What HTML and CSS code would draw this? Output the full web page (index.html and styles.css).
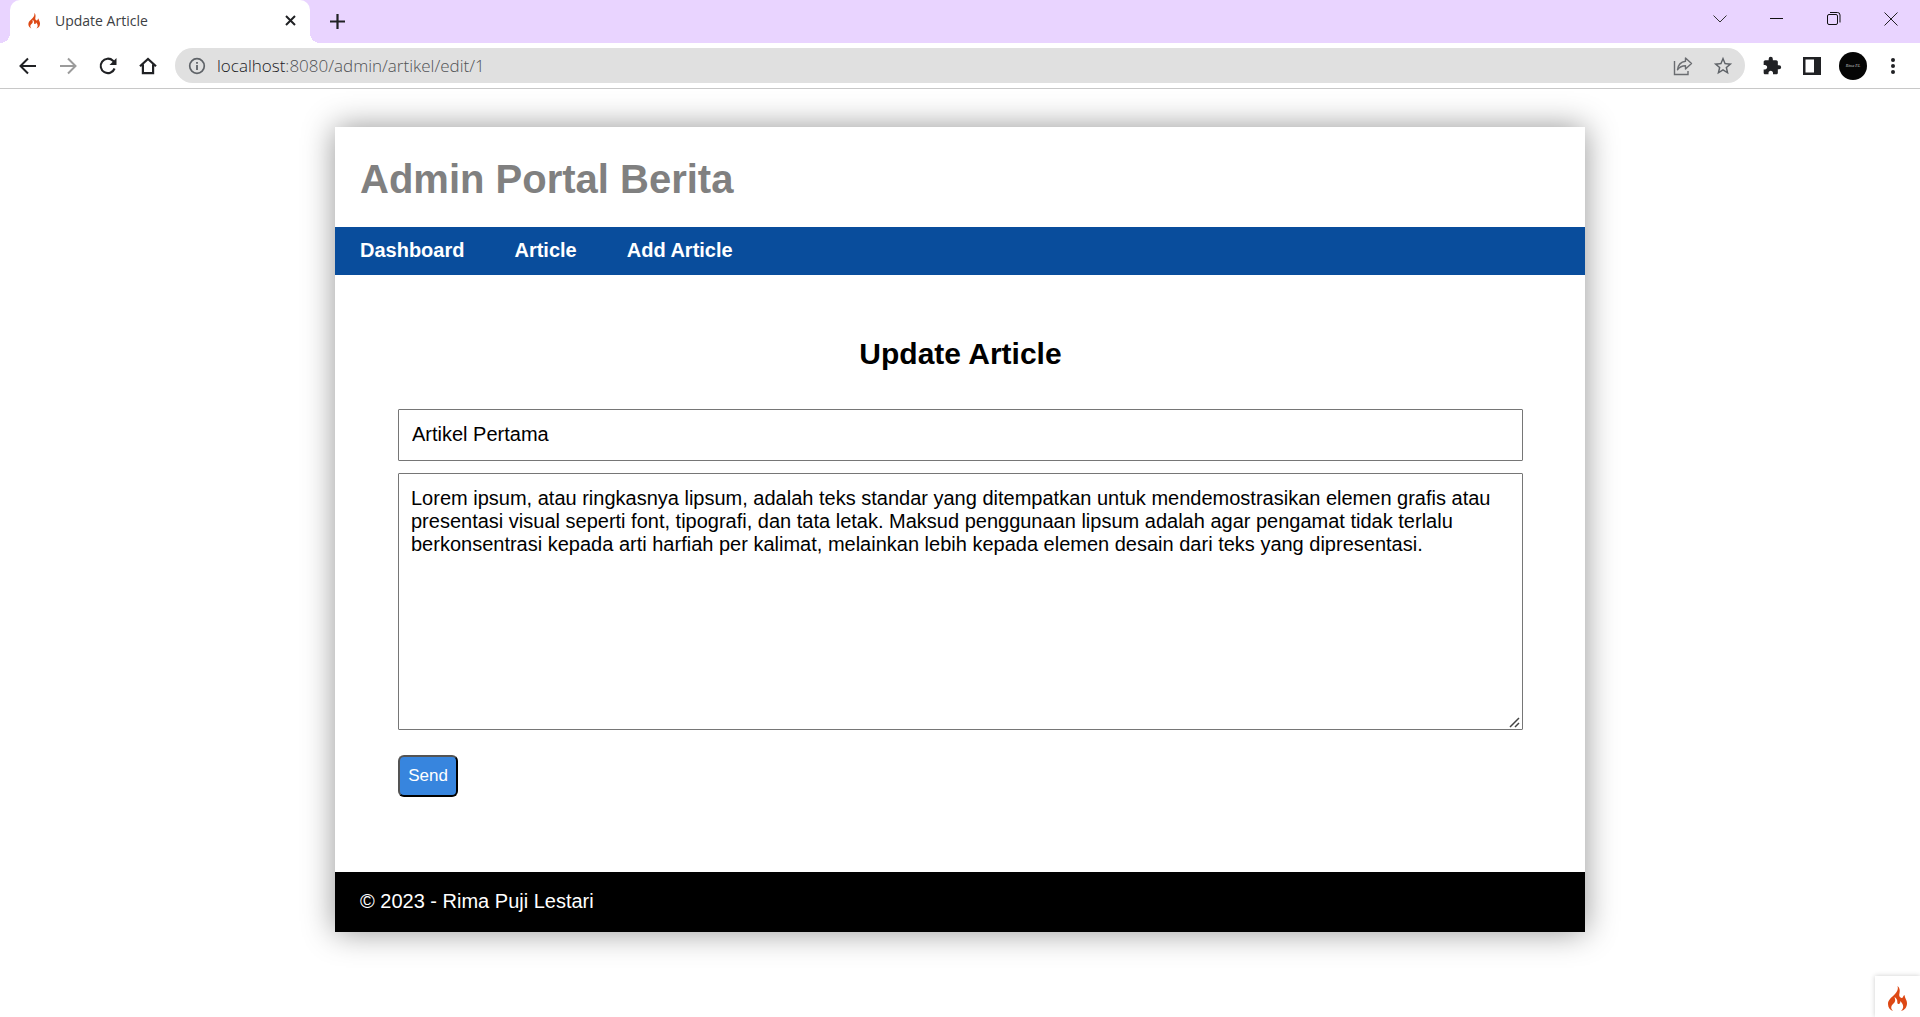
FILE: index.html
```html
<!DOCTYPE html>
<html lang="id">
<head>
  <meta charset="utf-8">
  <meta name="viewport" content="width=device-width, initial-scale=1">
  <title>Update Article</title>
  <link rel="stylesheet" href="styles.css">
</head>
<body>
  <div class="browser">
    <div class="tabstrip">
      <div class="tab">
        <svg class="tab-icon" viewBox="0 0 20 26" aria-hidden="true"><use href="#flame"/></svg>
        <span class="tab-title">Update Article</span>
        <button class="tab-close" type="button" aria-label="Close tab">
          <svg width="11" height="11" viewBox="0 0 11 11"><path d="M1 1l9 9M10 1l-9 9" stroke="#202124" stroke-width="2" fill="none"/></svg>
        </button>
      </div>
      <button class="new-tab" type="button" aria-label="New tab">
        <svg width="15" height="15" viewBox="0 0 15 15"><path d="M7.5 0v15M0 7.5h15" stroke="#202124" stroke-width="2.2" fill="none"/></svg>
      </button>
      <div class="window-controls">
        <button type="button" aria-label="Search tabs"><svg width="14" height="14" viewBox="0 0 14 14"><path d="M.5 3.500l6.500 6.500 6.500-6.500" stroke="#333" fill="none"/></svg></button>
        <button type="button" aria-label="Minimize"><svg width="14" height="14" viewBox="0 0 14 14"><path d="M0 6.500h13" stroke="#111" fill="none"/></svg></button>
        <button type="button" aria-label="Restore"><svg width="14" height="14" viewBox="0 0 14 14"><rect x=".5" y="2.500" width="10" height="10" rx="1.500" stroke="#111" fill="none"/><path d="M3 .5h7.500a2.500 2.500 0 0 1 2.500 2.500v7.500" stroke="#111" fill="none"/></svg></button>
        <button type="button" aria-label="Close window"><svg width="14" height="14" viewBox="0 0 14 14"><path d="M.5 .5l13 13M13.500 .5l-13 13" stroke="#222" fill="none"/></svg></button>
      </div>
    </div>
    <div class="toolbar">
      <div class="nav-buttons">
        <button type="button" aria-label="Back"><svg width="18" height="18" viewBox="0 0 18 18"><path d="M17 9H2M9 1.500L1.500 9 9 16.500" stroke="#202124" stroke-width="2" fill="none"/></svg></button>
        <button type="button" aria-label="Forward"><svg width="18" height="18" viewBox="0 0 18 18"><path d="M1 9h15M9 1.500l7.500 7.500L9 16.500" stroke="#9b9b9b" stroke-width="2" fill="none"/></svg></button>
        <button type="button" aria-label="Reload"><svg width="18" height="18" viewBox="0 0 18 18"><path d="M15.600 11.500A7.200 7.200 0 1 1 14 3.800L16 6" stroke="#202124" stroke-width="2.100" fill="none"/><path d="M17.500 1v7h-7z" fill="#202124"/></svg></button>
        <button type="button" aria-label="Home"><svg width="18" height="18" viewBox="0 0 18 18"><path d="M1 9.200L9 2l8 7.200M3.900 7.500v8.700h10.200V7.500" stroke="#202124" stroke-width="2.200" fill="none"/></svg></button>
      </div>
      <div class="address">
        <svg class="info" width="18" height="18" viewBox="0 0 18 18" aria-hidden="true"><circle cx="9" cy="9" r="7.300" stroke="#5f6368" stroke-width="1.700" fill="none"/><path d="M9 8v5M9 5v1.800" stroke="#5f6368" stroke-width="1.800"/></svg>
        <div class="url" role="textbox" contenteditable="true" spellcheck="false" aria-label="Address">localhost<span>:8080/admin/artikel/edit/1</span></div>
        <button type="button" aria-label="Share"><svg width="20" height="20" viewBox="0 0 20 20"><path d="M1.500 5v13.500h13.500v-3.500" stroke="#6a6c70" stroke-width="1.400" fill="none"/><path d="M12.500 2l6 5.500-6 5.500V9.800c-3.500 0-6 1.200-8 4 .5-4.500 3-8 8-8.600z" stroke="#6a6c70" stroke-width="1.400" fill="none" stroke-linejoin="round"/></svg></button>
        <button type="button" aria-label="Bookmark"><svg width="22" height="22" viewBox="0 0 24 24"><path d="M22 9.240l-7.190-.62L12 2 9.190 8.630 2 9.240l5.460 4.730L5.820 21 12 17.270 18.180 21l-1.630-7.030L22 9.240zM12 15.400l-3.760 2.270 1-4.280-3.320-2.880 4.380-.38L12 6.100l1.710 4.040 4.380.38-3.320 2.880 1 4.280L12 15.400z" fill="#5f6368"/></svg></button>
      </div>
      <div class="tools">
        <button type="button" aria-label="Extensions"><svg width="20" height="20" viewBox="0 0 24 24"><path d="M20.500 11H19V7c0-1.100-.9-2-2-2h-4V3.500a2.500 2.500 0 0 0-5 0V5H4c-1.100 0-1.990.9-1.990 2v3.800H3.500c1.490 0 2.700 1.210 2.700 2.700s-1.210 2.700-2.700 2.700H2V20c0 1.100.9 2 2 2h3.800v-1.500c0-1.490 1.210-2.700 2.700-2.700s2.700 1.210 2.700 2.700V22H17c1.100 0 2-.9 2-2v-4h1.500a2.500 2.500 0 0 0 0-5z" fill="#202124"/></svg></button>
        <button type="button" aria-label="Side panel"><svg width="18" height="18" viewBox="0 0 18 18"><path d="M0 0h18v18H0zM2.500 2.500v13h8.500v-13z" fill="#202124" fill-rule="evenodd"/></svg></button>
        <button class="avatar" type="button" aria-label="Profile"><span>Rima P.L</span></button>
        <button type="button" aria-label="Menu"><svg width="18" height="18" viewBox="0 0 18 18"><circle cx="9" cy="3" r="2" fill="#202124"/><circle cx="9" cy="9" r="2" fill="#202124"/><circle cx="9" cy="15" r="2" fill="#202124"/></svg></button>
      </div>
    </div>
  </div>

  <div class="container">
    <header class="site-header"><h1>Admin Portal Berita</h1></header>
    <nav class="site-nav">
      <a href="#">Dashboard</a>
      <a href="#">Article</a>
      <a href="#">Add Article</a>
    </nav>
    <main class="content">
      <h2>Update Article</h2>
      <form class="article-form">
        <input type="text" name="judul" aria-label="Judul" value="Artikel Pertama">
        <textarea name="isi" rows="10" spellcheck="false" aria-label="Isi">Lorem ipsum, atau ringkasnya lipsum, adalah teks standar yang ditempatkan untuk mendemostrasikan elemen grafis atau presentasi visual seperti font, tipografi, dan tata letak. Maksud penggunaan lipsum adalah agar pengamat tidak terlalu berkonsentrasi kepada arti harfiah per kalimat, melainkan lebih kepada elemen desain dari teks yang dipresentasi.</textarea>
        <button class="send" type="submit">Send</button>
      </form>
    </main>
    <footer class="site-footer">© 2023 - Rima Puji Lestari</footer>
  </div>

  <a class="debug-icon" href="#" aria-label="Debug toolbar">
    <svg width="20" height="26" viewBox="0 0 20 26"><path id="flame" d="M9.500 0c1 3 0 5-2.500 8-4 4-7 6-7 10 0 3.500 2 6 5 7-1.500-1.500-2.200-3-1.500-5 .7-2 3.500-3 3.700-5.500-.1-1.300-.2-2.300-.7-3.500 2 1.200 3 3 2.800 5 0 1.700.7 2.300 1.700 2 1.200-.4 1.500-1.600 1.200-3 3.300 3 4.300 7 .8 10 4-1 6-4 6-8 0-3-2.200-4.500-2.500-8-1.700 1-1.200 3.200-3 3-2.200-.6-2.700-2.500-2-5C12.200 4 11.500 1.500 9.500 0z" fill="#dd4814"/></svg>
  </a>
</body>
</html>
```
FILE: styles.css
```css
* {
  box-sizing: border-box;
}

body {
  margin: 0;
  background: #fff;
  color: #000;
  font-family: "Liberation Sans", Arial, sans-serif;
  font-size: 20px;
  line-height: 23px;
}

/* Browser frame */
.browser {
  font-family: "Open Sans", "Noto Sans", sans-serif;
  border-bottom: 1px solid #c8c8c8;
}

.browser button {
  display: flex;
  align-items: center;
  justify-content: center;
  padding: 0;
  border: 0;
  background: none;
}

.tabstrip {
  display: flex;
  height: 43px;
  padding-left: 10px;
  background: #e9d4ff;
}

.tab {
  position: relative;
  display: flex;
  align-items: center;
  width: 300px;
  padding: 0 14px 2px 18px;
  border-radius: 10px 10px 0 0;
  background: #fff;
}

.tab::before,
.tab::after {
  content: "";
  position: absolute;
  bottom: 0;
  width: 10px;
  height: 10px;
}

.tab::before {
  right: 100%;
  background: radial-gradient(circle at 0 0, #e9d4ff 10px, #fff 10px);
}

.tab::after {
  left: 100%;
  background: radial-gradient(circle at 100% 0, #e9d4ff 10px, #fff 10px);
}

.tab-icon {
  width: 13px;
  height: 16px;
}

.tab-title {
  flex: 1;
  margin-left: 14px;
  font-size: 14px;
  color: #3c4043;
}

.tab-close {
  width: 12px;
  height: 20px;
}

.new-tab {
  width: 54px;
}

.window-controls {
  display: flex;
  margin-left: auto;
  padding-right: 1px;
  height: 38px;
}

.window-controls button {
  width: 57px;
}

.toolbar {
  display: flex;
  align-items: center;
  height: 45px;
  padding-left: 8px;
}

.nav-buttons {
  display: flex;
  margin-right: 7px;
}

.nav-buttons button {
  width: 40px;
  height: 36px;
}

.address {
  display: flex;
  flex: 1;
  align-items: center;
  height: 35px;
  padding: 0 2px 0 13px;
  border-radius: 18px;
  background: #e0e0e0;
}

.url {
  flex: 1;
  margin-left: 11px;
  font-size: 17px;
  font-weight: 300;
  color: #202124;
}

.url span {
  color: #505255;
}

.address button {
  width: 40px;
}

.tools {
  display: flex;
  align-items: center;
  padding: 0 7px;
}

.tools button {
  width: 40px;
}

.tools .avatar {
  width: 28px;
  height: 28px;
  margin: 0 6px 0 7px;
  border-radius: 50%;
  background: #050505;
  color: #ccc;
  font-family: "Liberation Serif", serif;
  font-size: 4px;
  font-style: italic;
}

/* Page */
.container {
  width: 1250px;
  max-width: 100%;
  margin: 38px auto;
  background: #fff;
  box-shadow: 0 0 30px rgba(0, 0, 0, 0.42);
}

.site-header {
  padding: 27px 25px 23px;
}

h1 {
  margin: 0;
  color: gray;
  font-size: 40px;
  line-height: 50px;
}

.site-nav {
  display: flex;
  background: #094d9c;
}

.site-nav a {
  padding: 12px 25px 13px;
  color: #fff;
  font-weight: bold;
  text-decoration: none;
}

.content {
  padding: 62px 62px 75px 63px;
}

h2 {
  margin: 0 0 38px;
  font-size: 30px;
  line-height: 34px;
  text-align: center;
}

.article-form {
  display: flex;
  flex-direction: column;
  align-items: flex-start;
}

.article-form input,
.article-form textarea {
  width: 100%;
  padding: 13px 12px;
  border: 1px solid #767676;
  border-radius: 1px;
  background: #fff;
  color: #000;
  font: 20px/23px "Liberation Sans", Arial, sans-serif;
}

.article-form input {
  height: 52px;
  margin-bottom: 12px;
  padding: 12px 13px 14px;
}

.article-form textarea {
  height: 257px;
  margin-bottom: 25px;
}

.article-form textarea::-webkit-resizer {
  background: url("data:image/svg+xml,%3Csvg xmlns='http://www.w3.org/2000/svg' width='15' height='15'%3E%3Cpath d='M3 13L12 4M8 13L12 9' stroke='%23444' stroke-width='1.500'/%3E%3C/svg%3E") no-repeat right bottom;
}

.send {
  width: 60px;
  height: 42px;
  padding: 0;
  border: 2px outset #000;
  border-radius: 6px;
  background: #3785de;
  color: #fff;
  font: 17px "Liberation Sans", Arial, sans-serif;
}

.site-footer {
  padding: 18px 25px 19px;
  background: #000;
  color: #fff;
}

.debug-icon {
  position: fixed;
  right: 0;
  bottom: 0;
  display: flex;
  justify-content: center;
  width: 45px;
  height: 41px;
  padding-top: 10px;
  background: #fff;
  box-shadow: 0 0 5px rgba(0, 0, 0, 0.2);
}
```
